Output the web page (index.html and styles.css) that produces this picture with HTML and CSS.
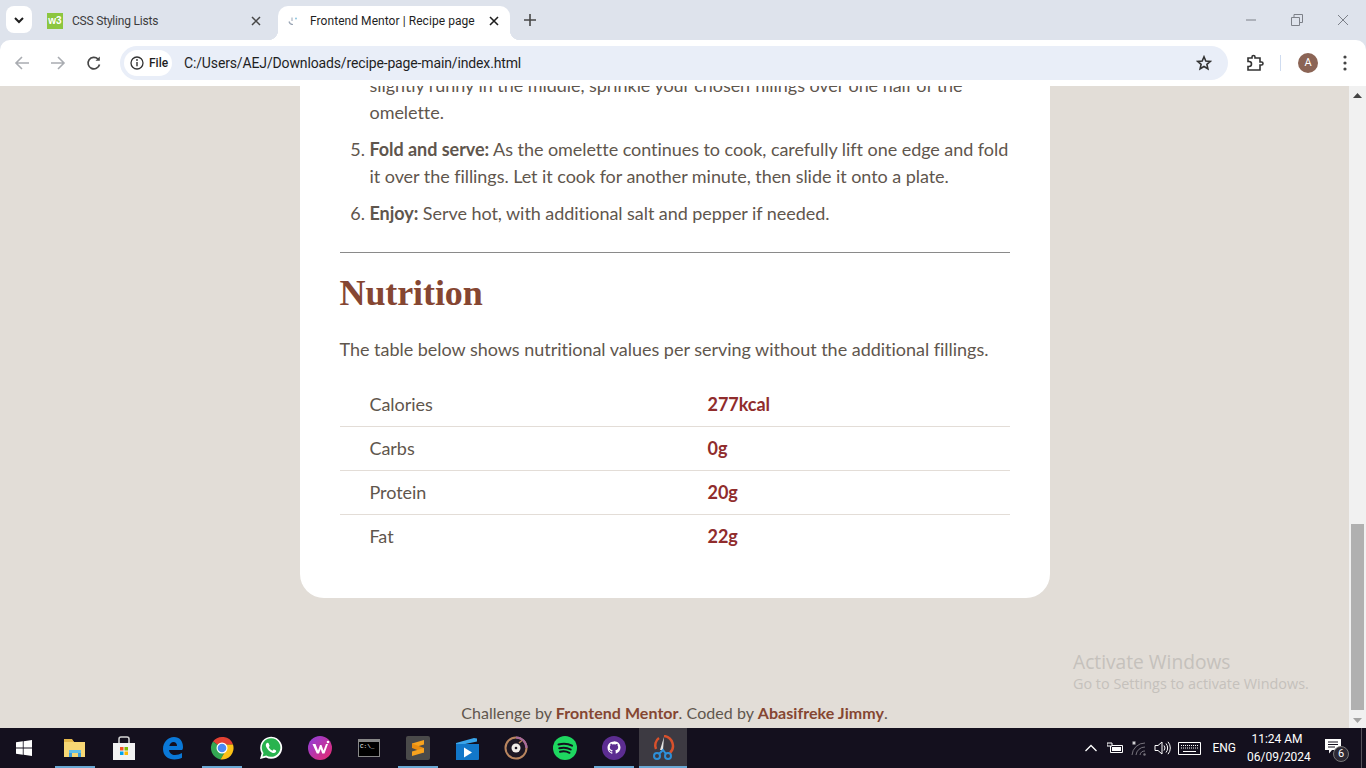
FILE: index.html
```html
<!DOCTYPE html>
<html lang="en">
<head>
    <meta charset="UTF-8">
    <meta name="viewport" content="width=device-width, initial-scale=1.0">
    <title>Frontend Mentor | Recipe page</title>
    <link rel="stylesheet" href="styles.css">
</head>
<body>
    <div class="chrome">
        <div class="tabstrip">
            <button class="tab-search">
                <svg width="12" height="12" viewBox="0 0 12 12"><path d="M2 4l4 4 4-4" fill="none" stroke="#1f1f1f" stroke-width="2"/></svg>
            </button>
            <div class="tab">
                <span class="w3-icon">w3</span>
                <span class="tab-title">CSS Styling Lists</span>
                <svg class="tab-close" width="10" height="10" viewBox="0 0 10 10"><path d="M1 1l8 8M9 1l-8 8" stroke="#474747" stroke-width="1.5"/></svg>
            </div>
            <div class="tab tab-active">
                <svg class="fm-icon" width="12" height="12" viewBox="0 0 12 12"><path d="M2 6.500c.5 2 2 3 4 3" fill="none" stroke="#9aa5b5" stroke-width="1.2"/><path d="M5 2.500v3.500" stroke="#9aa5b5" stroke-width="1"/><circle cx="9" cy="3.500" r="1" fill="#8cc5e0"/></svg>
                <span class="tab-title">Frontend Mentor | Recipe page</span>
                <svg class="tab-close" width="10" height="10" viewBox="0 0 10 10"><path d="M1 1l8 8M9 1l-8 8" stroke="#1f1f1f" stroke-width="1.6"/></svg>
            </div>
            <svg class="new-tab" width="12" height="12" viewBox="0 0 12 12"><path d="M6 0v12M0 6h12" stroke="#474747" stroke-width="1.6"/></svg>
            <div class="win-controls">
                <svg width="12" height="12" viewBox="0 0 12 12"><path d="M1 6h10" stroke="#7c8088" stroke-width="1"/></svg>
                <svg width="12" height="12" viewBox="0 0 12 12"><path d="M.5 3.500h8v8h-8zM3 3.500v-3h8.500v8h-3" fill="none" stroke="#7c8088" stroke-width="1"/></svg>
                <svg width="12" height="12" viewBox="0 0 12 12"><path d="M1 1l10 10M11 1l-10 10" stroke="#7c8088" stroke-width="1"/></svg>
            </div>
        </div>

        <div class="toolbar">
            <svg class="nav-icon" width="16" height="16" viewBox="0 0 16 16"><path d="M15 8H2M8 2L2 8l6 6" fill="none" stroke="#a9acb1" stroke-width="1.6"/></svg>
            <svg class="nav-icon" width="16" height="16" viewBox="0 0 16 16"><path d="M1 8h13M8 2l6 6-6 6" fill="none" stroke="#a9acb1" stroke-width="1.6"/></svg>
            <svg class="nav-icon" width="16" height="16" viewBox="0 0 16 16"><path d="M13.500 9.500A5.800 5.800 0 1 1 12 4" fill="none" stroke="#474747" stroke-width="1.700"/><path d="M13.800 1.500v4.300H9.500" fill="#474747"/></svg>
            <div class="address">
                <div class="site-chip">
                    <svg width="14" height="14" viewBox="0 0 14 14"><circle cx="7" cy="7" r="6" fill="none" stroke="#333" stroke-width="1.300"/><path d="M7 6v4.200" stroke="#333" stroke-width="1.400"/><circle cx="7" cy="4" r=".9" fill="#333"/></svg>
                    <span>File</span>
                </div>
                <span class="url">C:/Users/AEJ/Downloads/recipe-page-main/index.html</span>
                <svg class="star" width="16" height="16" viewBox="0 0 16 16"><path d="M8 1.800l1.800 4.200 4.500.4-3.400 3 1 4.400L8 11.500l-3.900 2.300 1-4.400-3.400-3 4.500-.4z" fill="none" stroke="#333" stroke-width="1.600"/></svg>
            </div>
            <svg class="ext-icon" width="18" height="18" viewBox="0 0 18 18"><path d="M2 4h4V3a1.500 1.500 0 0 1 3 0v1h5v4h1.500a1.500 1.500 0 0 1 0 3H14v5H2v-3.500h1a2 2 0 0 0 0-5H2z" fill="none" stroke="#333" stroke-width="1.600"/></svg>
            <span class="toolbar-sep"></span>
            <span class="avatar">A</span>
            <svg class="menu-icon" width="4" height="16" viewBox="0 0 4 16"><circle cx="2" cy="2" r="1.600" fill="#444"/><circle cx="2" cy="8" r="1.600" fill="#444"/><circle cx="2" cy="14" r="1.600" fill="#444"/></svg>
        </div>
    </div>

    <div class="viewport">
        <main class="page">
            <section class="card">
                <ol class="steps" start="4">
                    <li>Add fillings (optional): When the eggs begin to set at the edges but are still<br>slightly runny in the middle, sprinkle your chosen fillings over one half of the<br>omelette.</li>
                    <li><strong>Fold and serve:</strong> As the omelette continues to cook, carefully lift one edge and fold it over the fillings. Let it cook for another minute, then slide it onto a plate.</li>
                    <li><strong>Enjoy:</strong> Serve hot, with additional salt and pepper if needed.</li>
                </ol>
                <hr class="rule">
                <h2 class="heading">Nutrition</h2>
                <p class="intro">The table below shows nutritional values per serving without the additional fillings.</p>
                <table class="nutrition">
                    <tr><td>Calories</td><td>277kcal</td></tr>
                    <tr><td>Carbs</td><td>0g</td></tr>
                    <tr><td>Protein</td><td>20g</td></tr>
                    <tr><td>Fat</td><td>22g</td></tr>
                </table>
            </section>
            <footer class="credit">Challenge by <b>Frontend Mentor</b>. Coded by <b>Abasifreke Jimmy</b>.</footer>
            <div class="watermark">
                <div class="wm-big">Activate Windows</div>
                <div class="wm-small">Go to Settings to activate Windows.</div>
            </div>
        </main>
        <div class="scrollbar">
            <svg width="9" height="5" viewBox="0 0 9 5"><path d="M4.500 0L9 5H0z" fill="#444"/></svg>
            <div class="thumb"></div>
            <svg width="9" height="5" viewBox="0 0 9 5"><path d="M0 0h9L4.500 5z" fill="#a3a3a3"/></svg>
        </div>
    </div>

    <div class="taskbar">
        <svg class="start" width="16" height="16" viewBox="0 0 16 16"><path d="M0 2.300l6.800-1v6.300H0zM7.600 1.200L16 0v7.600H7.600zM0 8.400h6.800v6.300l-6.800-1zM7.600 8.400H16V16l-8.400-1.200z" fill="#fff"/></svg>
        <div class="tasks">
            <div class="task running">
                <svg width="22" height="20" viewBox="0 0 22 20"><path d="M0 2h8l2 2h11v15H0z" fill="#f7d774"/><path d="M0 1h8l2 3H0z" fill="#e5b84a"/><path d="M5 12h12v3H5z" fill="#62bfe8"/><path d="M5 15h3v4H5zM14 15h3v4h-3z" fill="#3d9ad6"/></svg>
            </div>
            <div class="task">
                <svg width="24" height="24" viewBox="0 0 24 24"><path d="M1 7h22v17H1z" fill="#f2f2f2"/><path d="M7 7V3a2 2 0 0 1 2-2h6a2 2 0 0 1 2 2v4" fill="none" stroke="#d5d5d5" stroke-width="1.500"/><path d="M8 11h3.500v3.500H8z" fill="#f25022"/><path d="M12.500 11H16v3.500h-3.500z" fill="#7fba00"/><path d="M8 15.500h3.500V19H8z" fill="#00a4ef"/><path d="M12.500 15.500H16V19h-3.500z" fill="#ffb900"/></svg>
            </div>
            <div class="task">
                <svg width="22" height="24" viewBox="0 0 22 24"><path d="M20 14H7c.5 3.500 3 5 6 5 2.500 0 5-.8 7-2v4.800c-2 1-4.500 1.700-7.500 1.700C6 23.500 1 19.500 1 13 1 6 6 1 12 1c5.500 0 9 4 9 10 0 1-.1 2-.9 3zM15 10c0-2.500-1.500-4-3.500-4S8 7.500 7.300 10z" fill="#0a78d7"/></svg>
            </div>
            <div class="task running">
                <svg width="24" height="24" viewBox="0 0 24 24"><path d="M12 12L3 5.500A11.500 11.500 0 0 1 23 8.500H12z" fill="#e34133"/><path d="M12 12l-9-6.500A11.500 11.500 0 0 0 10.500 23.400L16 14z" fill="#34a853"/><path d="M12 8.500h11A11.500 11.500 0 0 1 10.500 23.400L16 14z" fill="#fbc116"/><circle cx="12" cy="12" r="5.500" fill="#fff"/><circle cx="12" cy="12" r="4.300" fill="#4a8af4"/></svg>
            </div>
            <div class="task">
                <svg width="24" height="24" viewBox="0 0 24 24"><path d="M1 23l1.600-5.800A11 11 0 1 1 7 21.500z" fill="#fff"/><path d="M3.500 20.500l1-3.600A9.300 9.300 0 1 1 7.300 19.500z" fill="#29b34f"/><path d="M8.700 6.800c-.4 0-1 .2-1.400.8-.6 1-.6 2.200 0 3.500 1.200 2.600 3.300 4.600 5.900 5.600 1.500.6 2.900.3 3.600-.7.400-.6.400-1.200.3-1.500l-2.400-1.200-1.200 1.400c-1.700-.7-3-2-3.800-3.600l1-1.200-1-2.500c-.1-.3-.6-.6-1-.6z" fill="#fff"/></svg>
            </div>
            <div class="task">
                <svg width="24" height="24" viewBox="0 0 24 24"><defs><linearGradient id="wps" x1="0" y1="0" x2="1" y2="1"><stop offset="0" stop-color="#8c3fe0"/><stop offset="1" stop-color="#ea2a6c"/></linearGradient></defs><circle cx="12" cy="12" r="12" fill="url(#wps)"/><path d="M4.500 8h3l2.500 6.500L12 9h1.500l2 5.500L18 8h2l-3.500 9.500h-2.300L12.700 13l-1.700 4.500H8.800z" fill="#fff"/><circle cx="20" cy="6" r="1.300" fill="#fff"/></svg>
            </div>
            <div class="task">
                <div class="cmd-icon"><span>C:\_</span></div>
            </div>
            <div class="task running">
                <div class="sublime-box"><svg width="14" height="18" viewBox="0 0 14 18"><path d="M13 1v4.500L1 9V4.500z" fill="#f7a21e"/><path d="M1 4.500V9l12 4.500V9z" fill="#e98c10"/><path d="M13 9v4.500L1 17v-4.500z" fill="#f7a21e"/></svg></div>
            </div>
            <div class="task">
                <svg width="24" height="24" viewBox="0 0 24 24"><path d="M1 7l18-5 3 .5v3L1 10z" fill="#3aa5ea"/><path d="M1 8h23v15a1 1 0 0 1-1 1H1z" fill="#1277c9"/><path d="M9 11.500l8 5-8 5z" fill="#fff"/></svg>
            </div>
            <div class="task">
                <svg width="24" height="24" viewBox="0 0 24 24"><circle cx="12" cy="12" r="10.500" fill="#1d1724" stroke="#b9855f" stroke-width="2"/><path d="M12 1.500A10.500 10.500 0 0 1 22.500 12" fill="none" stroke="#a76a9c" stroke-width="2"/><circle cx="12" cy="12" r="4.500" fill="#f0ece8"/><circle cx="12" cy="12" r="1.300" fill="#1d1724"/><path d="M15 7l3-2.500" stroke="#b9855f" stroke-width="1.500"/></svg>
            </div>
            <div class="task">
                <svg width="24" height="24" viewBox="0 0 24 24"><circle cx="12" cy="12" r="12" fill="#1ed760"/><path d="M5.500 8.500c4.500-1.300 9.500-1 13.500 1.200M6.300 12.300c3.800-1 8-.7 11.400 1.200M7 15.800c3.200-.8 6.600-.5 9.500 1" fill="none" stroke="#14101e" stroke-width="2" stroke-linecap="round"/></svg>
            </div>
            <div class="task running">
                <svg width="24" height="24" viewBox="0 0 24 24"><circle cx="12" cy="12" r="12" fill="#5c2d91"/><path d="M12 5.500c-3.800 0-6.500 2.800-6.500 6.300 0 2.800 1.800 5.100 4.300 6 .4.100.5-.1.500-.3v-1.300c-1.800.4-2.200-.8-2.200-.8-.3-.7-.7-1-.7-1-.6-.4 0-.4 0-.4.700 0 1 .7 1 .7.600 1 1.500.7 1.900.5 0-.4.200-.7.400-.9-1.400-.2-2.900-.7-2.900-3.200 0-.7.200-1.300.7-1.700-.1-.2-.3-.9.100-1.700 0 0 .5-.2 1.800.7a6 6 0 0 1 3.200 0c1.300-.9 1.800-.7 1.800-.7.400.8.200 1.500.1 1.700.400.400.700 1 .700 1.700 0 2.500-1.500 3-2.900 3.200.200.200.400.600.400 1.200v1.800c0 .200.100.400.500.300 2.500-.900 4.300-3.200 4.300-6 0-3.500-2.700-6.300-6.500-6.300z" fill="#fff"/></svg>
            </div>
            <div class="task running task-active">
                <svg width="24" height="26" viewBox="0 0 24 26"><path d="M13 1a10 10 0 0 1 6 17" fill="none" stroke="#d9512c" stroke-width="2.500"/><path d="M8 3a9 9 0 0 0-3 11" fill="none" stroke="#d9512c" stroke-width="2.500"/><path d="M13 2l-1 13h-3z" fill="#e3e3e3"/><circle cx="6" cy="21" r="3" fill="none" stroke="#2d8fd8" stroke-width="2"/><circle cx="17" cy="21" r="3" fill="none" stroke="#2d8fd8" stroke-width="2"/><path d="M8 19l4-4 3 4" fill="none" stroke="#2d8fd8" stroke-width="2"/></svg>
            </div>
        </div>
        <div class="tray">
            <svg class="tray-caret" width="12" height="8" viewBox="0 0 12 8"><path d="M.5 7l5.500-5.500L11.500 7" fill="none" stroke="#fff" stroke-width="1.300"/></svg>
            <svg class="tray-battery" width="16" height="12" viewBox="0 0 16 12"><path d="M3.500 3.500h12v7h-12z" fill="none" stroke="#fff"/><path d="M5 5h9v4H5z" fill="#fff"/><path d="M0 1h5v3H0z" fill="#14101e" stroke="#fff"/></svg>
            <svg class="tray-wifi" width="16" height="16" viewBox="0 0 16 16"><path d="M1 15A13 13 0 0 1 14 3M5 15a9 9 0 0 1 9-8M9 15a5 5 0 0 1 5-4" fill="none" stroke="#77747d" stroke-width="1"/><circle cx="13.500" cy="14.500" r="1.200" fill="#77747d"/><path d="M3 1v4M1.300 2l3.400 2M4.700 2L1.300 4" stroke="#fff" stroke-width=".8"/></svg>
            <svg class="tray-volume" width="17" height="14" viewBox="0 0 17 14"><path d="M1 4.500h3L8 1v12L4 9.500H1z" fill="none" stroke="#fff"/><path d="M10 4.500a4 4 0 0 1 0 5M12 2.500a7 7 0 0 1 0 9M14 .8a9.500 9.500 0 0 1 0 12.400" fill="none" stroke="#fff"/></svg>
            <svg class="tray-kbd" width="23" height="13" viewBox="0 0 23 13"><path d="M.5.500h22v12H.5z" fill="none" stroke="#fff"/><path d="M3 3.500h17M3 6h17" stroke="#fff" stroke-dasharray="1 1"/><path d="M5 9.500h13" stroke="#fff"/></svg>
            <span class="tray-lang">ENG</span>
            <div class="clock"><div>11:24 AM</div><div>06/09/2024</div></div>
            <div class="notif">
                <svg width="16" height="15" viewBox="0 0 16 15"><path d="M0 0h16v11H7l-3 3.500V11H0z" fill="#fff"/><path d="M3 3h10M3 5.500h10M3 8h7" stroke="#14101e"/></svg>
                <span class="notif-count">6</span>
            </div>
        </div>
        <span class="show-desktop"></span>
    </div>
</body>
</html>
```

FILE: styles.css
```css
* {
    box-sizing: border-box;
}
html, body {
    height: 100%;
}
body {
    margin: 0;
    display: flex;
    flex-direction: column;
    overflow: hidden;
    font-family: "Lato", sans-serif;
    background-color: #e2ddd7;
}

/* browser chrome */
.chrome {
    flex-shrink: 0;
    background-color: #dee3ec;
    font-family: "Roboto", sans-serif;
}
.tabstrip {
    height: 40px;
    display: flex;
    align-items: flex-end;
    font-size: 12px;
    color: #3c3c3c;
}
.tab-search {
    width: 26px;
    height: 27px;
    margin: 0 4px 7px 6px;
    padding: 0;
    border: 0;
    border-radius: 8px;
    background-color: #fff;
    display: flex;
    justify-content: center;
    align-items: center;
}
.tab {
    width: 242px;
    height: 34px;
    padding: 0 0 5px 11px;
    display: flex;
    align-items: center;
}
.tab-active {
    width: 232px;
    padding-left: 9px;
    background-color: #fff;
    border-radius: 10px 10px 0 0;
    color: #1f1f1f;
    position: relative;
}
.tab-active::before,
.tab-active::after {
    content: "";
    position: absolute;
    bottom: 0;
    width: 10px;
    height: 10px;
}
.tab-active::before {
    left: -10px;
    background: radial-gradient(circle at 0 0, #dee3ec 10px, #fff 10.5px);
}
.tab-active::after {
    right: -10px;
    background: radial-gradient(circle at 100% 0, #dee3ec 10px, #fff 10.5px);
}
.w3-icon {
    width: 16px;
    height: 16px;
    margin-right: 9px;
    background-color: #8cc63f;
    color: #fff;
    font-family: "Liberation Sans", sans-serif;
    font-size: 10px;
    font-weight: bold;
    line-height: 15px;
    text-align: center;
}
.fm-icon {
    margin-right: 11px;
}
.tab-title {
    flex-grow: 1;
    white-space: nowrap;
    letter-spacing: -0.2px;
}
.tab-active .tab-title {
    letter-spacing: 0.06px;
}
.tab-close {
    margin-right: 17px;
    flex-shrink: 0;
}
.tab-active .tab-close {
    margin-right: 11px;
}
.new-tab {
    margin: 0 0 14px 14px;
}
.win-controls {
    margin-left: auto;
    align-self: flex-start;
    margin-top: 14px;
    margin-right: 17px;
    display: flex;
    gap: 34px;
}
.toolbar {
    height: 46px;
    display: flex;
    align-items: center;
    padding: 0 14px;
    background-color: #fff;
    border-radius: 10px 10px 0 0;
}
.nav-icon {
    margin-right: 20px;
}
.nav-icon:nth-child(3) {
    margin-right: 18px;
}
.address {
    width: 1108px;
    height: 34px;
    padding: 0 16px 0 4px;
    border-radius: 17px;
    background-color: #e9eef8;
    display: flex;
    align-items: center;
    font-size: 14px;
    color: #1f1f1f;
}
.site-chip {
    width: 48px;
    height: 26px;
    margin-right: 12px;
    border-radius: 13px;
    background-color: #fff;
    display: flex;
    align-items: center;
    gap: 5px;
    padding-left: 6px;
    font-size: 12px;
    font-weight: 500;
}
.url {
    white-space: nowrap;
    letter-spacing: -0.14px;
}
.star {
    margin-left: auto;
}
.ext-icon {
    margin-left: 18px;
}
.toolbar-sep {
    width: 1px;
    height: 16px;
    margin: 0 17px 0 16px;
    background-color: #cfdcf0;
}
.avatar {
    width: 20px;
    height: 20px;
    border-radius: 50%;
    background-color: #8b6455;
    color: #fff;
    font-size: 11px;
    line-height: 20px;
    text-align: center;
}
.menu-icon {
    margin-left: 25px;
}

/* page area */
.viewport {
    flex-grow: 1;
    min-height: 0;
    display: flex;
}
.page {
    flex-grow: 1;
    min-width: 0;
    position: relative;
    overflow: hidden;
    display: flex;
    flex-direction: column;
    justify-content: flex-end;
    align-items: center;
    color: #5f564d;
    font-size: 18px;
    line-height: 27px;
    letter-spacing: -0.05px;
}
.card {
    width: 750px;
    flex-shrink: 0;
    padding: 0 40px 39px;
    background-color: #fff;
    border-radius: 0 0 24px 24px;
}
.steps {
    margin: 0;
    padding-left: 30px;
}
.steps li {
    margin-bottom: 10px;
}
.steps li:last-child {
    margin-bottom: 0;
}
.rule {
    margin: 25px 0 0;
    border: 0;
    border-top: 1px solid #8a8a8a;
}
.heading {
    margin: 18px 0 0;
    font-family: "Liberation Serif", serif;
    font-size: 36px;
    line-height: 44px;
    letter-spacing: -0.1px;
    font-weight: bold;
    color: #854632;
}
.intro {
    margin: 21px 0 0;
    letter-spacing: -0.02px;
}
.nutrition {
    width: 100%;
    margin-top: 20px;
    border-collapse: separate;
    border-spacing: 0;
}
.nutrition td {
    height: 44px;
    padding: 0;
    border-bottom: 1px solid #e3ddd7;
}
.nutrition tr:last-child td {
    padding-bottom: 1px;
    border-bottom: 0;
}
.nutrition td:first-child {
    width: 368px;
    padding-left: 30px;
}
.nutrition td:last-child {
    font-weight: 700;
    color: #902c2c;
}
.credit {
    margin-top: 103px;
    padding-bottom: 3px;
    flex-shrink: 0;
    font-size: 16px;
    line-height: 24px;
    letter-spacing: 0.05px;
}
.credit b {
    color: #854632;
}
.watermark {
    position: absolute;
    left: 1073px;
    top: 566px;
    font-family: "Open Sans", sans-serif;
    color: #c5c1bc;
    line-height: 1;
    letter-spacing: 0;
    white-space: nowrap;
}
.wm-big {
    font-size: 19.2px;
    margin-bottom: 6px;
}
.wm-small {
    font-size: 14.4px;
}

/* scrollbar */
.scrollbar {
    width: 17px;
    flex-shrink: 0;
    padding: 7px 0 5px;
    background-color: #f1f1f1;
    display: flex;
    flex-direction: column;
    align-items: center;
    justify-content: space-between;
}
.thumb {
    width: 13px;
    height: 186px;
    margin-top: auto;
    margin-bottom: 8px;
    background-color: #b0b0b0;
}

/* windows taskbar */
.taskbar {
    height: 40px;
    flex-shrink: 0;
    display: flex;
    align-items: center;
    background-color: #14101e;
    color: #fff;
    font-family: "Roboto", sans-serif;
}
.start {
    margin-left: 16px;
    margin-right: 19px;
    flex-shrink: 0;
}
.tasks {
    display: flex;
    height: 100%;
    gap: 1px;
}
.task {
    width: 48px;
    height: 100%;
    display: flex;
    justify-content: center;
    align-items: center;
}
.running {
    background: linear-gradient(#6aa8d4, #6aa8d4) center bottom / 40px 2px no-repeat;
}
.task-active {
    background: linear-gradient(#6aa8d4, #6aa8d4) center bottom / 100% 2px no-repeat, #3d3a42;
}
.cmd-icon {
    width: 22px;
    height: 18px;
    background-color: #000;
    border: 1px solid #888;
    border-top-width: 3px;
    overflow: hidden;
}
.cmd-icon span {
    display: block;
    font-size: 6px;
    line-height: 9px;
    padding-left: 1px;
    font-family: "Liberation Mono", monospace;
}
.sublime-box {
    width: 24px;
    height: 24px;
    background-color: #4a4a4a;
    border-radius: 2px;
    display: flex;
    justify-content: center;
    align-items: center;
}
.tray {
    margin-left: auto;
    height: 100%;
    display: flex;
    align-items: center;
    font-size: 12px;
    padding-right: 20px;
}
.tray-caret {
    margin-right: 10px;
}
.tray-battery {
    margin-right: 8px;
}
.tray-wifi {
    margin-right: 7px;
}
.tray-volume {
    margin-right: 7px;
}
.tray-kbd {
    margin-right: 11px;
}
.tray-lang {
    margin-right: 11px;
}
.clock {
    width: 60px;
    text-align: center;
    line-height: 18px;
    margin-right: 18px;
    white-space: nowrap;
}
.notif {
    position: relative;
    width: 16px;
    height: 22px;
    padding-top: 2px;
}
.notif-count {
    position: absolute;
    right: -8px;
    bottom: -3px;
    width: 16px;
    height: 16px;
    border-radius: 50%;
    background-color: #2c2833;
    border: 1px solid #777;
    font-size: 11px;
    line-height: 14px;
    text-align: center;
}
.show-desktop {
    width: 5px;
    height: 100%;
    border-left: 1px solid #55525a;
}
```
